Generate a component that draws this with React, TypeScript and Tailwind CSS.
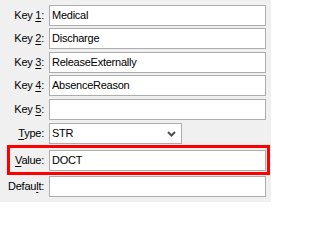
const font = { fontFamily: '"Liberation Sans", Arial, sans-serif' }

const Label = ({ pre, key_, post }: { pre: string; key_: string; post: string }) => (
  <span className="w-[34px] shrink-0 text-right whitespace-nowrap">
    {pre}
    <span className="underline underline-offset-[2px]">{key_}</span>
    {post}
  </span>
)

const Field = ({ value }: { value?: string }) => (
  <div className="ml-[5px] flex h-[21px] w-[217px] items-center border border-[#adadad] bg-white pl-[2px]">
    {value}
  </div>
)

const Row = ({ label, value, className = '' }: { label: [string, string, string]; value?: string; className?: string }) => (
  <div className={`flex items-center pl-[3px] ${className}`}>
    <Label pre={label[0]} key_={label[1]} post={label[2]} />
    <Field value={value} />
  </div>
)

export default function App() {
  return (
    <div
      className="h-[202px] w-[271px] overflow-hidden bg-[#f0f0f0] pl-[7px] pt-[5px] text-[11px] tracking-[-0.25px] text-black"
      style={font}
    >
      <Row label={['Key ', '1', ':']} value="Medical" />
      <Row label={['Key ', '2', ':']} value="Discharge" className="mt-[2px]" />
      <Row label={['Key ', '3', ':']} value="ReleaseExternally" className="mt-[3px]" />
      <Row label={['Key ', '4', ':']} value="AbsenceReason" className="mt-[2px]" />
      <Row label={['Key ', '5', ':']} className="mt-[3px]" />

      <div className="mt-[3px] flex items-center pl-[3px]">
        <Label pre="" key_="T" post="ype:" />
        <div className="ml-[5px] flex h-[21px] w-[133px] items-center justify-between border border-[#adadad] bg-white pl-[2px] pr-[5px]">
          <span>STR</span>
          <svg width="9" height="6" viewBox="0 0 9 6">
            <path d="M1 1 L4.5 4.5 L8 1" fill="none" stroke="#505050" strokeWidth="2" />
          </svg>
        </div>
      </div>

      <div className="mt-[1px] flex h-[30px] w-[263px] items-start border-[3px] border-[#ff0000] pt-[2px]">
        <div className="flex items-center">
          <Label pre="" key_="V" post="alue:" />
          <Field value="DOCT" />
        </div>
      </div>

      <Row label={['Defau', 'l', 't:']} className="mt-[1px] -ml-[3px] [&>span]:w-[37px]" />
    </div>
  )
}
